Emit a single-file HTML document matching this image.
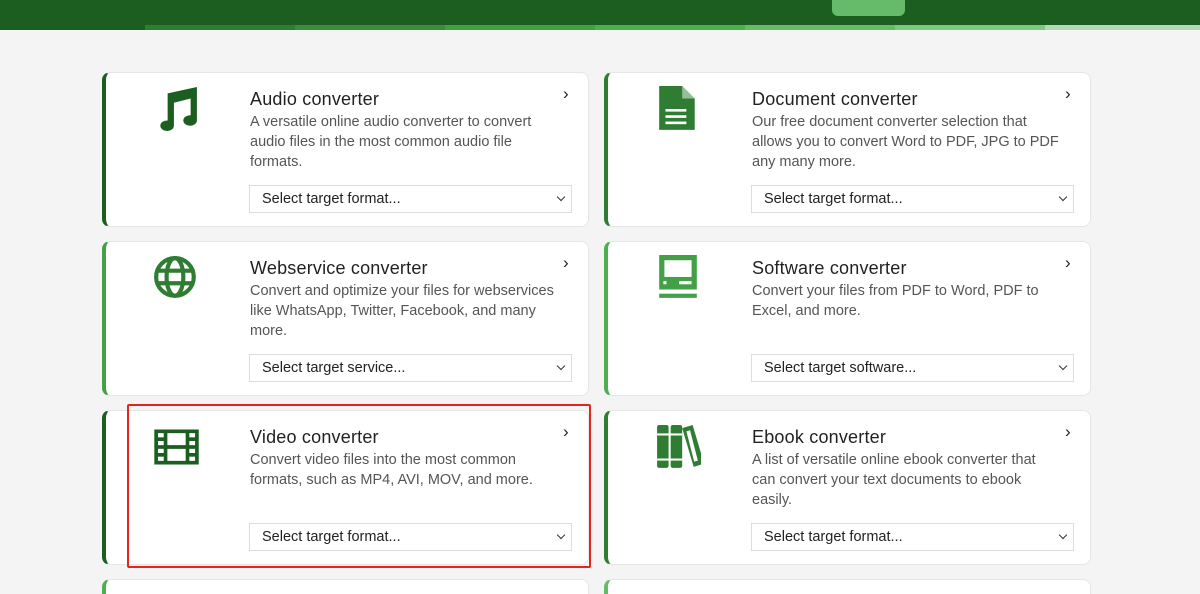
<!DOCTYPE html>
<html><head><meta charset="utf-8"><style>
*{box-sizing:border-box;margin:0;padding:0}
html,body{width:1200px;height:594px;overflow:hidden}
body{background:#f4f4f4;font-family:"Liberation Sans",sans-serif;position:relative}
.hdr{position:absolute;left:0;top:0;width:1200px;height:30px;background:#1b5e20}
.seg{position:absolute;top:25px;height:5px}
.tab{position:absolute;left:832px;top:0;width:73px;height:16px;background:#66bb6a;border-radius:0 0 6px 6px}
.card{position:absolute;width:487px;height:155px;background:#fff;border:1px solid #e6e6e6;border-left:4px solid #1b5e20;border-radius:8px}
.ic{position:absolute;left:47px;top:13px;width:46px;height:46px}
.t{position:absolute;left:144px;top:16px;font-size:18px;color:#222;letter-spacing:.2px}
.d{position:absolute;left:144px;top:39px;width:312px;font-size:14.5px;line-height:20px;color:#555}
.ar{position:absolute;left:457px;top:11px;font-size:17px;color:#222}
.sel{position:absolute;left:143px;top:112px;width:323px;height:28px;border:1px solid #ddd;font-size:14.5px;color:#222;padding:5px 12px}
.sel:after{content:"";position:absolute;right:7px;top:8px;width:5px;height:5px;border-right:1.6px solid #333;border-bottom:1.6px solid #333;transform:rotate(45deg)}
.red{position:absolute;left:127px;top:404px;width:464px;height:164px;border:2px solid #e52420;border-radius:2px}
</style></head><body>
<div class="hdr"></div>
<div class="seg" style="left:0;width:145px;background:#1b5e20"></div>
<div class="seg" style="left:145px;width:150px;background:#2e7d32"></div>
<div class="seg" style="left:295px;width:150px;background:#388e3c"></div>
<div class="seg" style="left:445px;width:150px;background:#43a047"></div>
<div class="seg" style="left:595px;width:150px;background:#4caf50"></div>
<div class="seg" style="left:745px;width:150px;background:#66bb6a"></div>
<div class="seg" style="left:895px;width:150px;background:#81c784"></div>
<div class="seg" style="left:1045px;width:155px;background:#b5d9b5"></div>
<div class="tab"></div>

<div class="card" style="left:102px;top:72px;border-left-color:#1b5e20">
<svg class="ic" viewBox="0 0 44 44"><path fill="#1b5e20" d="M14 7 L42 1 V33 A6.5 5 0 1 1 36 28 V12 L20 16 V38 A6.5 5 0 1 1 14 33Z"/></svg>
<div class="t">Audio converter</div><div class="ar">›</div>
<div class="d">A versatile online audio converter to convert audio files in the most common audio file formats.</div>
<div class="sel">Select target format...</div></div>

<div class="card" style="left:604px;top:72px;border-left-color:#2e7d32">
<svg class="ic" viewBox="0 0 44 44"><path fill="#2e7d32" d="M4 0 H26 L38 12 V42 H4Z"/><path fill="#fff" d="M26 0 V12 H38Z" opacity=".5"/><rect x="10" y="22" width="20" height="2.5" fill="#fff"/><rect x="10" y="28" width="20" height="2.5" fill="#fff"/><rect x="10" y="34" width="20" height="2.5" fill="#fff"/></svg>
<div class="t">Document converter</div><div class="ar">›</div>
<div class="d">Our free document converter selection that allows you to convert Word to PDF, JPG to PDF any many more.</div>
<div class="sel">Select target format...</div></div>

<div class="card" style="left:102px;top:241px;border-left-color:#43a047">
<svg class="ic" viewBox="0 0 44 44"><g fill="none" stroke="#2e7d32" stroke-width="4"><circle cx="21" cy="21" r="18"/><ellipse cx="21" cy="21" rx="8" ry="18"/><line x1="3" y1="15" x2="39" y2="15"/><line x1="3" y1="27" x2="39" y2="27"/></g></svg>
<div class="t">Webservice converter</div><div class="ar">›</div>
<div class="d">Convert and optimize your files for webservices like WhatsApp, Twitter, Facebook, and many more.</div>
<div class="sel">Select target service...</div></div>

<div class="card" style="left:604px;top:241px;border-left-color:#4caf50">
<svg class="ic" viewBox="0 0 44 44"><rect x="4" y="0" width="36" height="33" fill="#43a047"/><rect x="9" y="5" width="26" height="16" fill="#fff"/><rect x="8" y="25" width="3" height="3" fill="#fff"/><rect x="23" y="25" width="12" height="3" fill="#fff"/><rect x="4" y="37" width="36" height="4" fill="#43a047"/></svg>
<div class="t">Software converter</div><div class="ar">›</div>
<div class="d">Convert your files from PDF to Word, PDF to Excel, and more.</div>
<div class="sel">Select target software...</div></div>

<div class="card" style="left:102px;top:410px;border-left-color:#1b5e20">
<svg class="ic" viewBox="0 0 44 44"><g fill="none" stroke="#1b5e20" stroke-width="3.5"><rect x="3" y="7" width="39" height="30"/><line x1="12" y1="7" x2="12" y2="37"/><line x1="33" y1="7" x2="33" y2="37"/><line x1="12" y1="22" x2="33" y2="22"/><line x1="3" y1="14.5" x2="12" y2="14.5"/><line x1="3" y1="22" x2="12" y2="22"/><line x1="3" y1="29.5" x2="12" y2="29.5"/><line x1="33" y1="14.5" x2="42" y2="14.5"/><line x1="33" y1="22" x2="42" y2="22"/><line x1="33" y1="29.5" x2="42" y2="29.5"/></g></svg>
<div class="t">Video converter</div><div class="ar">›</div>
<div class="d">Convert video files into the most common formats, such as MP4, AVI, MOV, and more.</div>
<div class="sel">Select target format...</div></div>

<div class="card" style="left:604px;top:410px;border-left-color:#2e7d32">
<svg class="ic" viewBox="0 0 44 44"><g fill="#2e7d32"><rect x="2" y="1" width="11" height="41" rx="2"/><rect x="15" y="1" width="11" height="41" rx="2"/><path d="M26 4 L36 1 L47 38 L37 41Z"/></g><g fill="#fff"><rect x="2" y="9" width="24" height="2"/><rect x="2" y="33" width="24" height="2"/><path d="M30 7 L33.5 6 L41 35 L37.5 36Z"/></g></svg>
<div class="t">Ebook converter</div><div class="ar">›</div>
<div class="d" style="width:298px">A list of versatile online ebook converter that can convert your text documents to ebook easily.</div>
<div class="sel">Select target format...</div></div>

<div class="card" style="left:102px;top:579px;height:15px;border-bottom:0;border-radius:8px 8px 0 0;border-left-color:#4caf50"></div>
<div class="card" style="left:604px;top:579px;height:15px;border-bottom:0;border-radius:8px 8px 0 0;border-left-color:#66bb6a"></div>
<div class="red"></div>
</body></html>
